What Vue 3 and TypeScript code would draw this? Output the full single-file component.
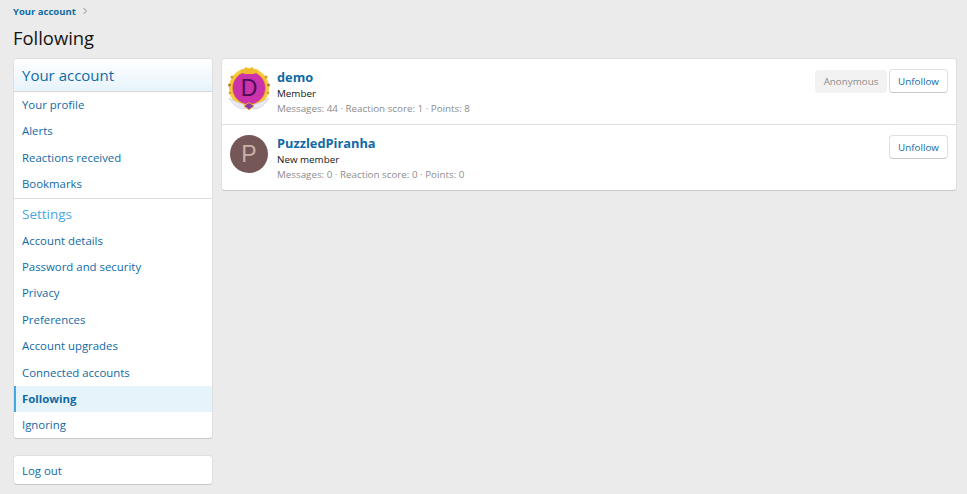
<script setup lang="ts">
const accountLinks = ['Your profile', 'Alerts', 'Reactions received', 'Bookmarks']
const settingsLinks = ['Account details', 'Password and security', 'Privacy', 'Preferences', 'Account upgrades', 'Connected accounts', 'Following', 'Ignoring']
const users = [
  { name: 'demo', initial: 'D', title: 'Member', stats: 'Messages: 44 · Reaction score: 1 · Points: 8', anon: true, frame: true },
  { name: 'PuzzledPiranha', initial: 'P', title: 'New member', stats: 'Messages: 0 · Reaction score: 0 · Points: 0', anon: false, frame: false },
]
</script>

<template>
  <div class="page">
    <div class="crumb">
      <a>Your account</a>
      <svg width="6" height="8" viewBox="0 0 6 8"><path d="M1.5 1l3 3-3 3" fill="none" stroke="#8c8c8c" stroke-width="1" /></svg>
    </div>
    <h1>Following</h1>
    <div class="cols">
      <aside class="side">
        <nav class="block">
          <h3>Your account</h3>
          <a v-for="l in accountLinks" :key="l" class="link">{{ l }}</a>
          <h4>Settings</h4>
          <a v-for="l in settingsLinks" :key="l" class="link" :class="{ on: l === 'Following' }">{{ l }}</a>
        </nav>
        <div class="block logout"><a class="link">Log out</a></div>
      </aside>
      <main class="block list">
        <div v-for="u in users" :key="u.name" class="row">
          <div class="av" :class="u.frame ? 'pink' : 'brown'">
            <svg v-if="u.frame" class="frame" width="46" height="46" viewBox="0 0 46 46">
              <circle cx="23" cy="22" r="18.2" fill="none" stroke="#f6ca3e" stroke-width="3.6" />
              <circle cx="23" cy="22" r="16.5" fill="none" stroke="#e6921c" stroke-width="0.8" />
              <path d="M14.500 6.500l.5-3.500 2.500 1.600L20 .8l3 2.700 3-2.700 2.500 3.800L31 3l.5 3.500-4.500 1.500h-8z" fill="#f0bb2c" />
              <circle cx="3.500" cy="19" r="1.500" fill="#b9792a" /><circle cx="42.500" cy="19" r="1.500" fill="#b9792a" />
              <circle cx="6" cy="11" r="1.500" fill="#d99a28" /><circle cx="40" cy="11" r="1.500" fill="#d99a28" />
              <circle cx="4" cy="27" r="1.300" fill="#d99a28" /><circle cx="42" cy="27" r="1.300" fill="#d99a28" />
              <path d="M3 32c5 3 10 5 15 6.500l3 1.500-2 3c-7 0-12-4-16-11z" fill="#e9eaf4" stroke="#c3c6dc" stroke-width="0.6" />
              <path d="M43 32c-5 3-10 5-15 6.500l-3 1.500 2 3c7 0 12-4 16-11z" fill="#e9eaf4" stroke="#c3c6dc" stroke-width="0.6" />
              <path d="M23 36.500l5 3.500-5 3.800-5-3.800z" fill="#8d3aa8" stroke="#e3a72c" stroke-width="1" />
            </svg>
            <span class="letter">{{ u.initial }}</span>
          </div>
          <div class="body">
            <div class="top">
              <a class="name">{{ u.name }}</a>
              <div class="btns">
                <span v-if="u.anon" class="anon">Anonymous</span>
                <button class="btn">Unfollow</button>
              </div>
            </div>
            <div class="title">{{ u.title }}</div>
            <div class="stats">{{ u.stats }}</div>
          </div>
        </div>
      </main>
    </div>
  </div>
</template>

<style>
html, body { margin: 0; background: #ebebeb; }
</style>

<style scoped>
.page {
  box-sizing: border-box;
  width: 967px;
  height: 494px;
  overflow: hidden;
  padding: 4px 10px 0 13px;
  font-family: "Open Sans", "Noto Sans", sans-serif;
  font-size: 12px;
  color: #141414;
  background: #ebebeb;
}
.crumb {
  display: flex;
  align-items: center;
  gap: 6px;
  height: 14px;
  font-size: 9.500px;
  font-weight: 700;
  color: #0f6aa5;
}
h1 {
  margin: 7px 0 8px;
  height: 25px;
  font-size: 18.400px;
  line-height: 25px;
  font-weight: 400;
}
.cols {
  display: flex;
  align-items: flex-start;
  gap: 8px;
}
.side {
  width: 200px;
  flex: none;
  display: flex;
  flex-direction: column;
  gap: 16px;
}
.block {
  box-sizing: border-box;
  background: #fff;
  border: 1px solid #dfdfdf;
  border-bottom-color: #c8c8c8;
  border-radius: 4px;
  overflow: hidden;
}
.side nav { height: 381px; }
h3 {
  margin: 0;
  height: 33px;
  box-sizing: border-box;
  padding: 0 8px;
  font-size: 15px;
  line-height: 33px;
  font-weight: 400;
  color: #0f6aa5;
  background: linear-gradient(#fff, #e6f3fb);
  border-bottom: 1px solid #d8d8d8;
}
h4 {
  margin: 0;
  height: 30px;
  padding: 0 8px;
  font-size: 13.500px;
  line-height: 31px;
  font-weight: 400;
  color: #47a7df;
  border-top: 1px solid #dfdfdf;
  box-sizing: border-box;
}
.link {
  display: block;
  box-sizing: border-box;
  height: 26.400px;
  padding: 0 8px;
  line-height: 26px;
  font-size: 11.400px;
  color: #0f6aa5;
}
.link.on {
  padding-left: 6px;
  font-weight: 700;
  background: #e6f3fb;
  border-left: 2px solid #47a7df;
}
.logout { height: 30px; }
.logout .link { height: 28px; line-height: 29px; }
.list {
  flex: 1;
  height: 133px;
}
.row {
  display: flex;
  box-sizing: border-box;
  height: 65px;
  padding: 10px 8px;
  gap: 9px;
}
.row + .row { height: 66px; border-top: 1px solid #dfdfdf; }
.av {
  position: relative;
  flex: none;
  width: 38px;
  height: 38px;
  border-radius: 50%;
  display: flex;
  align-items: center;
  justify-content: center;
}
.letter {
  position: relative;
  font-family: "Liberation Sans", Arial, sans-serif;
  font-size: 23px;
  line-height: 38px;
}
.pink { background: radial-gradient(circle, #cc33aa 0 16.500px, transparent 17px); color: #4a0d55; }
.brown { background: #755757; color: #c8b0a8; }
.frame {
  position: absolute;
  left: -4px;
  top: -3px;
}
.body { flex: 1; min-width: 0; }
.top {
  display: flex;
  justify-content: space-between;
  height: 16px;
}
.name {
  font-size: 12.800px;
  line-height: 16px;
  font-weight: 700;
  color: #0f6aa5;
}
.btns {
  display: flex;
  align-items: flex-start;
  gap: 2px;
}
.anon {
  box-sizing: border-box;
  width: 72px;
  height: 23px;
  text-align: center;
  font-size: 9.800px;
  line-height: 23px;
  color: #8c8c8c;
  background: #f2f2f2;
  border-radius: 4px;
  margin-top: 1px;
}
.btn {
  box-sizing: border-box;
  height: 24px;
  width: 59px;
  padding: 0;
  font: inherit;
  font-size: 9.800px;
  color: #0f6aa5;
  background: #fff;
  border: 1px solid #dfdfdf;
  border-bottom-color: #c8c8c8;
  border-radius: 4px;
}
.title {
  margin-top: 2px;
  font-size: 9.800px;
  line-height: 14px;
}
.stats {
  margin-top: 1px;
  font-size: 9.800px;
  line-height: 14px;
  color: #8c8c8c;
}
</style>
